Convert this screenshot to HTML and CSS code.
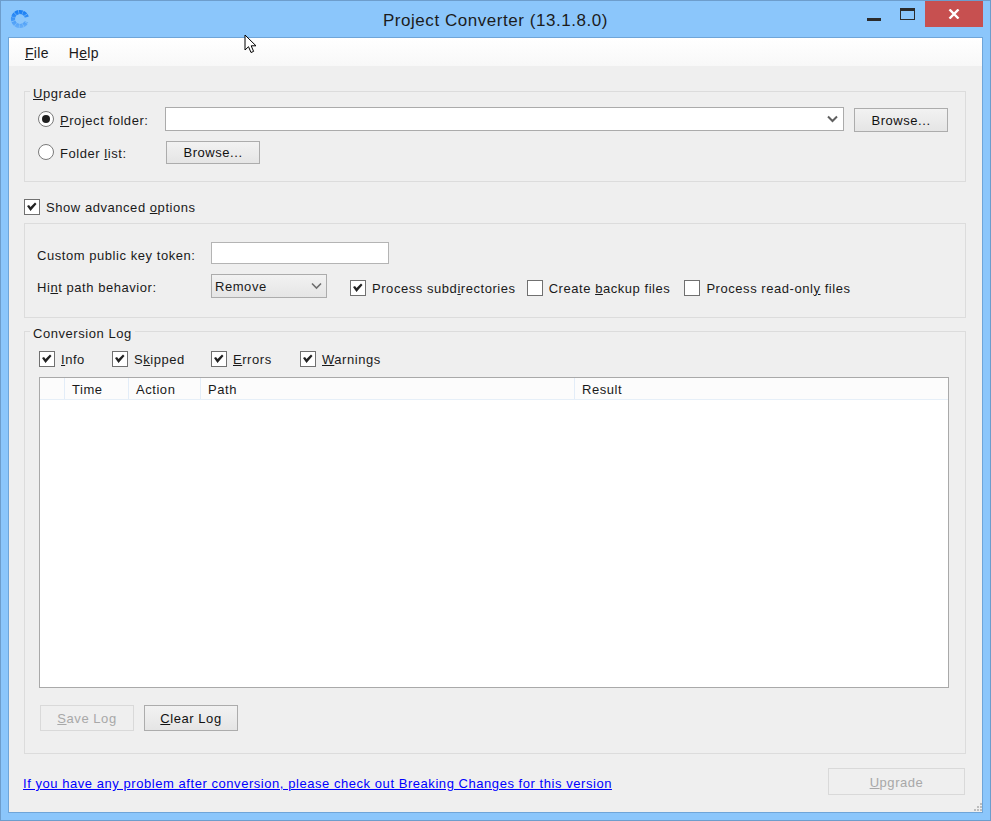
FILE: index.html
```html
<!DOCTYPE html>
<html lang="en">
<head>
    <meta charset="UTF-8">
    <title>Project Converter (13.1.8.0)</title>
    <link rel="stylesheet" href="styles.css">
</head>
<body>
    <div class="window">
        <div class="titlebar">
            <div class="app-icon">
                <svg width="22" height="22" viewBox="0 0 22 22">
                    <defs>
                        <linearGradient id="ringFade" x1="0" y1="0" x2="0" y2="1">
                            <stop offset="0" stop-color="#1c80f4" />
                            <stop offset="1" stop-color="#62acf9" />
                        </linearGradient>
                    </defs>
                    <circle cx="11" cy="11" r="7" fill="none" stroke="url(#ringFade)" stroke-width="4.2" stroke-dasharray="3.5 0.5" pathLength="44" />
                    <path d="M11 11 L22 8 V16 Z" fill="#8bc6fb" />
                </svg>
            </div>
            <div class="title">Project Converter (13.1.8.0)</div>
            <div class="controls">
                <span class="btn-min"></span>
                <span class="btn-max"></span>
                <span class="btn-close">
                    <svg width="12" height="10" viewBox="0 0 12 10"><path d="M1.5 0.5 L10.5 9.5 M10.5 0.5 L1.5 9.5" stroke="#fff" stroke-width="2.4" /></svg>
                </span>
            </div>
        </div>

        <div class="content">
            <div class="menubar">
                <span><u>F</u>ile</span>
                <span>H<u>e</u>lp</span>
            </div>

            <div class="main">
                <div class="group group-upgrade">
                    <div class="group-title"><u>U</u>pgrade</div>
                    <div class="row row-project">
                        <label class="radio-label"><span class="radio on"></span><span><u>P</u>roject folder:</span></label>
                        <div class="combo">
                            <svg width="11" height="8" viewBox="0 0 11 8"><path d="M1 1.5 L5.5 6 L10 1.5" fill="none" stroke="#5f5f5f" stroke-width="2" /></svg>
                        </div>
                        <button class="btn btn-browse" type="button">Browse...</button>
                    </div>
                    <div class="row row-list">
                        <label class="radio-label"><span class="radio"></span><span>Folder <u>l</u>ist:</span></label>
                        <button class="btn" type="button">Browse...</button>
                    </div>
                </div>

                <label class="check check-advanced"><span class="box on"></span><span>Show advanced <u>o</u>ptions</span></label>

                <div class="group group-advanced">
                    <div class="row row-token">
                        <span class="field-label">Custom public key token:</span>
                        <div class="textbox"></div>
                    </div>
                    <div class="row row-hint">
                        <span class="field-label">Hi<u>n</u>t path behavior:</span>
                        <div class="dropdown">
                            <span>Remove</span>
                            <svg width="11" height="8" viewBox="0 0 11 8"><path d="M1 1.5 L5.5 6 L10 1.5" fill="none" stroke="#6e6e6e" stroke-width="1.6" /></svg>
                        </div>
                        <label class="check check-subdirs"><span class="box on"></span><span>Process subd<u>i</u>rectories</span></label>
                        <label class="check check-backup"><span class="box"></span><span>Create <u>b</u>ackup files</span></label>
                        <label class="check"><span class="box"></span><span>Process read-onl<u>y</u> files</span></label>
                    </div>
                </div>

                <div class="group group-log">
                    <div class="group-title">Conversion Log</div>
                    <div class="row row-filters">
                        <label class="check filter-info"><span class="box on"></span><span><u>I</u>nfo</span></label>
                        <label class="check filter-skipped"><span class="box on"></span><span>S<u>k</u>ipped</span></label>
                        <label class="check filter-errors"><span class="box on"></span><span><u>E</u>rrors</span></label>
                        <label class="check"><span class="box on"></span><span><u>W</u>arnings</span></label>
                    </div>
                    <div class="log-table">
                        <div class="log-head">
                            <div class="col col-icon"></div>
                            <div class="col col-time">Time</div>
                            <div class="col col-action">Action</div>
                            <div class="col col-path">Path</div>
                            <div class="col col-result">Result</div>
                        </div>
                    </div>
                    <div class="row row-logbtns">
                        <button class="btn" type="button" disabled><u>S</u>ave Log</button>
                        <button class="btn" type="button"><u>C</u>lear Log</button>
                    </div>
                </div>

                <div class="footer">
                    <a class="link" href="#">If you have any problem after conversion, please check out Breaking Changes for this version</a>
                    <button class="btn btn-upgrade" type="button" disabled><u>U</u>pgrade</button>
                </div>
            </div>

            <svg class="grip" width="10" height="10" viewBox="0 0 10 10">
                <path d="M8 1h2v2H8z M5 4h2v2H5z M8 4h2v2H8z M2 7h2v2H2z M5 7h2v2H5z M8 7h2v2H8z" fill="#bdbdbd" />
            </svg>
        </div>

        <svg class="cursor" width="14" height="21" viewBox="0 0 14 21">
            <path d="M1 1 V16 L4.5 12.7 L7 18.5 L9.6 17.4 L7.2 11.8 H12 Z" fill="#fff" stroke="#000" stroke-width="1" />
        </svg>
    </div>
</body>
</html>
```

FILE: styles.css
```css
* {
    box-sizing: border-box;
}

body {
    margin: 0;
    font-family: "Liberation Sans", Arial, sans-serif;
    font-size: 13px;
    letter-spacing: 0.55px;
    color: #1a1a1a;
    background: #8bc6fb;
}

button {
    font: inherit;
    letter-spacing: inherit;
}

.window {
    position: relative;
    width: 991px;
    height: 821px;
    padding: 0 7px 7px;
    background: #8bc6fb;
    border: 1px solid #6d9dcc;
    display: flex;
    flex-direction: column;
}

/* title bar */
.titlebar {
    height: 36px;
    display: grid;
    grid-template-columns: 1fr auto 1fr;
}

.app-icon {
    padding: 7px 0 0 1px;
}

.title {
    font-size: 17px;
    padding-top: 10px;
    color: #1c1c1c;
}

.controls {
    display: flex;
    justify-content: flex-end;
    align-items: flex-start;
}

.btn-min {
    width: 14px;
    height: 3px;
    margin: 17px 19px 0 0;
    background: #2b2b2b;
}

.btn-max {
    width: 15px;
    height: 12px;
    margin: 7px 10px 0 0;
    border: 1px solid #2b2b2b;
    border-top-width: 3px;
}

.btn-close {
    width: 58px;
    height: 26px;
    background: #c75050;
    display: flex;
    align-items: center;
    justify-content: center;
}

/* client area */
.content {
    position: relative;
    flex: 1;
    background: #efefef;
    border: 1px solid #6fa5d8;
    display: flex;
    flex-direction: column;
}

.menubar {
    height: 28px;
    padding: 7px 0 0 16px;
    display: flex;
    gap: 20px;
    background: linear-gradient(#ffffff, #f8f8f8);
    font-size: 14px;
    letter-spacing: 0.3px;
}

.main {
    padding: 25px 16px 0 15px;
}

.group {
    border: 1px solid #dcdcdc;
    width: 942px;
}

.group-title {
    width: fit-content;
    height: 16px;
    margin: -6px 0 0 5px;
    padding: 0 3px;
    line-height: 16px;
    background: #efefef;
}

.row {
    display: flex;
    align-items: center;
}

/* upgrade */
.group-upgrade {
    height: 91px;
}

.row-project {
    margin: 5px 0 0 13px;
    height: 25px;
    align-items: flex-start;
}

.row-list {
    margin: 8px 0 0 13px;
    height: 24px;
}

.radio-label {
    width: 128px;
    display: flex;
    align-items: center;
    gap: 6px;
}

.radio-label span:last-child {
    margin-top: 2px;
}

.row-project .radio-label {
    width: 127px;
    height: 24px;
}

.radio {
    position: relative;
    width: 16px;
    height: 16px;
    border: 1px solid #7a7a7a;
    border-radius: 50%;
    background: #fff;
    display: flex;
    align-items: center;
    justify-content: center;
}

.radio.on::after {
    content: "";
    width: 8px;
    height: 8px;
    border-radius: 50%;
    background: #1f1f1f;
}

.combo {
    width: 679px;
    height: 24px;
    background: #fff;
    border: 1px solid #ababab;
    display: flex;
    align-items: center;
    justify-content: flex-end;
    padding-right: 5px;
}

.btn {
    width: 94px;
    height: 24px;
    padding: 1px 0 0;
    color: #111;
    background: linear-gradient(#f2f2f2, #e5e5e5);
    border: 1px solid #acacac;
}

.btn:disabled {
    color: #a8a8a8;
    background: #efefef;
    border-color: #d9d9d9;
}

.btn-browse {
    margin: 1px 0 0 10px;
    padding-top: 0;
}

.row-list .btn {
    height: 23px;
}

/* checkboxes */
.check {
    display: flex;
    align-items: center;
    gap: 6px;
}

.box {
    width: 16px;
    height: 16px;
    background: #fff;
    border: 1px solid #707070;
    position: relative;
}

.box.on::after {
    content: "";
    position: absolute;
    inset: 0;
    background: #222;
    clip-path: polygon(2px 6px, 4px 5px, 5.5px 7px, 10px 2.5px, 11.5px 4px, 5.5px 11px);
}

.check-advanced {
    margin-top: 17px;
    height: 16px;
}

/* advanced options */
.group-advanced {
    margin-top: 8px;
    height: 95px;
}

.field-label {
    width: 174px;
}

.row-token {
    margin: 18px 0 0 12px;
    height: 22px;
}

.row-token .field-label {
    margin-top: 4px;
}

.textbox {
    width: 178px;
    height: 22px;
    background: #fff;
    border: 1px solid #b4b4b4;
}

.row-hint {
    margin: 10px 0 0 12px;
    height: 24px;
}

.row-hint .field-label {
    margin-top: 2px;
}

.row-hint .check {
    margin-top: 4px;
}

.dropdown {
    width: 116px;
    height: 24px;
    padding: 0 4px 0 3px;
    background: linear-gradient(#f2f2f2, #e5e5e5);
    border: 1px solid #acacac;
    display: flex;
    align-items: center;
    justify-content: space-between;
}

.check-subdirs {
    margin-left: 23px;
}

.row-hint .check-backup {
    margin: 4px 14px 0 11px;
}

/* log */
.group-log {
    margin-top: 13px;
    height: 423px;
}

.row-filters {
    margin: 9px 0 0 14px;
    height: 16px;
}

.filter-info {
    width: 73px;
}

.filter-skipped {
    width: 99px;
}

.filter-errors {
    width: 89px;
}

.log-table {
    margin: 10px 0 0 14px;
    width: 910px;
    height: 311px;
    background: #fff;
    border: 1px solid #a9a9a9;
}

.log-head {
    height: 22px;
    display: flex;
    background: #fcfcfc;
    border-bottom: 1px solid #e6eff8;
}

.col {
    padding: 4px 0 0 7px;
    border-right: 1px solid #e3edf8;
    height: 21px;
}

.col-icon {
    width: 25px;
}

.col-time {
    width: 64px;
}

.col-action {
    width: 72px;
}

.col-path {
    width: 374px;
}

.col-result {
    flex: 1;
    border-right: 0;
}

.row-logbtns {
    margin: 17px 0 0 15px;
    gap: 10px;
}

.row-logbtns .btn {
    height: 26px;
    padding-top: 0;
}

/* bottom of the window */
.footer {
    display: flex;
    justify-content: space-between;
    align-items: flex-start;
    margin-top: 14px;
    width: 941px;
}

.link {
    margin: 8px 0 0 -1px;
    color: #0000ff;
}

.btn-upgrade {
    width: 137px;
    height: 27px;
}

.grip {
    position: absolute;
    right: 0;
    bottom: 0;
}

.cursor {
    position: absolute;
    left: 243px;
    top: 33px;
}
```
